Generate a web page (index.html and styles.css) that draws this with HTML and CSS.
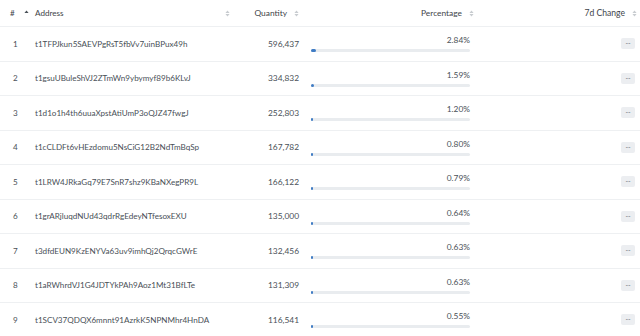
FILE: index.html
```html
<!DOCTYPE html>
<html>
<head>
<meta charset="utf-8">
<link rel="stylesheet" href="styles.css">
</head>
<body>
<div class="table">
  <div class="row head">
    <div class="c-num">#<svg class="sort on" viewBox="0 0 6 8"><path d="M3 0.5 L5.5 3.5 H0.5 Z"/></svg></div>
    <div class="c-addr between">Address<svg class="sort" viewBox="0 0 6 8"><path d="M3 0.5 L5.5 3.3 H0.5 Z M3 7.5 L5.5 4.7 H0.5 Z"/></svg></div>
    <div class="c-qty">Quantity<svg class="sort" viewBox="0 0 6 8"><path d="M3 0.5 L5.5 3.3 H0.5 Z M3 7.5 L5.5 4.7 H0.5 Z"/></svg></div>
    <div class="c-pct hd">Percentage<svg class="sort" viewBox="0 0 6 8"><path d="M3 0.5 L5.5 3.3 H0.5 Z M3 7.5 L5.5 4.7 H0.5 Z"/></svg></div>
    <div class="c-chg hd">7d Change<svg class="sort" viewBox="0 0 6 8"><path d="M3 0.5 L5.5 3.3 H0.5 Z M3 7.5 L5.5 4.7 H0.5 Z"/></svg></div>
  </div>
  <div class="row">
    <div class="c-num">1</div><div class="c-addr">t1TFPJkun5SAEVPgRsT5fbVv7uinBPux49h</div><div class="c-qty">596,437</div>
    <div class="c-pct"><span>2.84%</span><div class="bar"><div class="fill" style="width:2.84%"></div></div></div>
    <div class="c-chg"><span class="badge">--</span></div>
  </div>
  <div class="row">
    <div class="c-num">2</div><div class="c-addr">t1gsuUBuleShVJ2ZTmWn9ybymyf89b6KLvJ</div><div class="c-qty">334,832</div>
    <div class="c-pct"><span>1.59%</span><div class="bar"><div class="fill" style="width:1.59%"></div></div></div>
    <div class="c-chg"><span class="badge">--</span></div>
  </div>
  <div class="row">
    <div class="c-num">3</div><div class="c-addr">t1d1o1h4th6uuaXpstAtiUmP3oQJZ47fwgJ</div><div class="c-qty">252,803</div>
    <div class="c-pct"><span>1.20%</span><div class="bar"><div class="fill" style="width:1.20%"></div></div></div>
    <div class="c-chg"><span class="badge">--</span></div>
  </div>
  <div class="row">
    <div class="c-num">4</div><div class="c-addr">t1cCLDFt6vHEzdomu5NsCiG12B2NdTmBqSp</div><div class="c-qty">167,782</div>
    <div class="c-pct"><span>0.80%</span><div class="bar"><div class="fill" style="width:0.80%"></div></div></div>
    <div class="c-chg"><span class="badge">--</span></div>
  </div>
  <div class="row">
    <div class="c-num">5</div><div class="c-addr">t1LRW4JRkaGq79E7SnR7shz9KBaNXegPR9L</div><div class="c-qty">166,122</div>
    <div class="c-pct"><span>0.79%</span><div class="bar"><div class="fill" style="width:0.79%"></div></div></div>
    <div class="c-chg"><span class="badge">--</span></div>
  </div>
  <div class="row">
    <div class="c-num">6</div><div class="c-addr">t1grARjluqdNUd43qdrRgEdeyNTfesoxEXU</div><div class="c-qty">135,000</div>
    <div class="c-pct"><span>0.64%</span><div class="bar"><div class="fill" style="width:0.64%"></div></div></div>
    <div class="c-chg"><span class="badge">--</span></div>
  </div>
  <div class="row">
    <div class="c-num">7</div><div class="c-addr">t3dfdEUN9KzENYVa63uv9imhQj2QrqcGWrE</div><div class="c-qty">132,456</div>
    <div class="c-pct"><span>0.63%</span><div class="bar"><div class="fill" style="width:0.63%"></div></div></div>
    <div class="c-chg"><span class="badge">--</span></div>
  </div>
  <div class="row">
    <div class="c-num">8</div><div class="c-addr">t1aRWhrdVJ1G4JDTYkPAh9Aoz1Mt31BfLTe</div><div class="c-qty">131,309</div>
    <div class="c-pct"><span>0.63%</span><div class="bar"><div class="fill" style="width:0.63%"></div></div></div>
    <div class="c-chg"><span class="badge">--</span></div>
  </div>
  <div class="row">
    <div class="c-num">9</div><div class="c-addr">t1SCV37QDQX6mnnt91AzrkK5NPNMhr4HnDA</div><div class="c-qty">116,541</div>
    <div class="c-pct"><span>0.55%</span><div class="bar"><div class="fill" style="width:0.55%"></div></div></div>
    <div class="c-chg"><span class="badge">--</span></div>
  </div>
</div>
</body>
</html>
```
FILE: styles.css
```css
html, body {
  margin: 0;
  padding: 0;
  background: #ffffff;
}
body {
  font-family: "Lato", "Open Sans", sans-serif;
  font-size: 8.1px;
  color: #495057;
  overflow: hidden;
}
.table {
  width: 640px;
}
.row {
  display: grid;
  grid-template-columns: 33px 202px 70px 171px 164px;
  height: 34.5px;
  border-bottom: 1px solid #eef0f2;
  box-sizing: border-box;
  align-items: center;
}
.row.head {
  height: 27px;
  color: #3e4449;
}
.c-num {
  padding-left: 13px;
  display: flex;
  align-items: center;
}
.head .c-num {
  padding-left: 10px;
}
.c-addr {
  padding-left: 2px;
  display: flex;
  align-items: center;
}
.c-addr.between {
  justify-content: space-between;
  padding-right: 5px;
}
.c-qty {
  text-align: right;
  padding-right: 6px;
  display: flex;
  justify-content: flex-end;
  align-items: center;
  font-size: 8.4px;
}
.c-pct {
  padding: 0 6px;
  display: flex;
  flex-direction: column;
  align-items: flex-end;
  font-size: 8.4px;
}
.c-pct.hd {
  flex-direction: row;
  justify-content: flex-end;
  align-items: center;
  padding-right: 2px;
}
.c-pct span {
  line-height: 10px;
}
.bar {
  width: 100%;
  height: 3px;
  margin-top: 4px;
  background: #e9ecef;
  border-radius: 2px;
}
.fill {
  height: 100%;
  background: #3f7cc4;
  border-radius: 2px;
  min-width: 2px;
}
.c-chg {
  display: flex;
  justify-content: flex-end;
  align-items: center;
  padding-right: 5px;
  font-size: 8.4px;
}
.c-chg.hd {
  padding-right: 3px;
  font-size: 8.6px;
}
.sort {
  width: 5px;
  height: 7px;
  margin-left: 7px;
  fill: #c8ccd0;
}
.sort.on {
  fill: #495057;
  margin-left: 9px;
}
.badge {
  display: inline-block;
  background: #eceef1;
  color: #6f767d;
  font-size: 7px;
  line-height: 11px;
  width: 14px;
  text-align: center;
  border-radius: 2px;
}
```
